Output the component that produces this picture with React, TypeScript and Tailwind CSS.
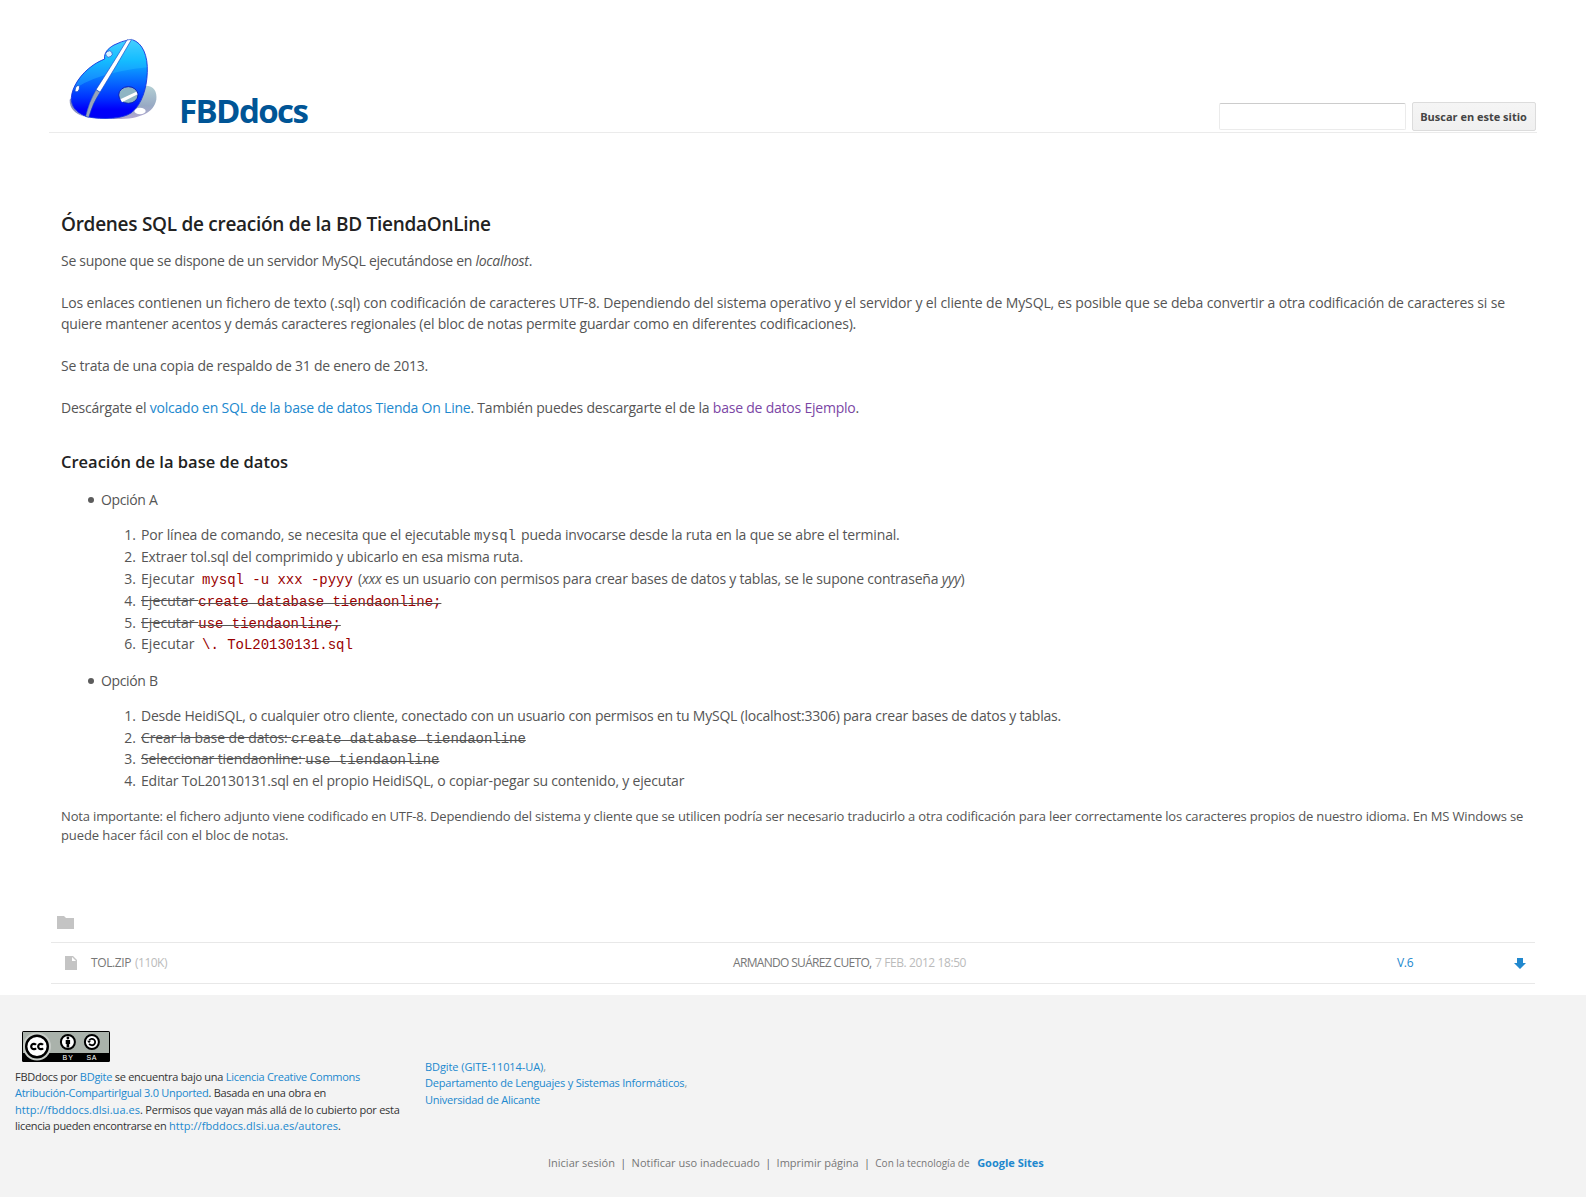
import type { ReactNode } from 'react';

const link = 'text-[#2188ce]';

function Logo() {
  return (
    <svg className="ml-[17px] mt-[37px] h-[84px] w-[94px] shrink-0" viewBox="78 50 282 252">
      <defs>
        <linearGradient id="body" x1="0" y1="0" x2="0" y2="1">
          <stop offset="0" stopColor="#5ad4ff" />
          <stop offset=".28" stopColor="#08b4ff" />
          <stop offset=".42" stopColor="#0a88ff" />
          <stop offset=".72" stopColor="#0030ff" />
          <stop offset=".85" stopColor="#0000fa" />
          <stop offset="1" stopColor="#0000f4" />
        </linearGradient>
        <linearGradient id="shade" x1="0" y1="0" x2="0" y2="1">
          <stop offset="0" stopColor="#b4d0d4" />
          <stop offset=".6" stopColor="#98aac4" />
          <stop offset="1" stopColor="#b3a6d0" />
        </linearGradient>
        <clipPath id="shape">
          <path d="M277 58C308 68 324 106 322 156C320 205 306 250 276 276C250 296 190 299 140 289C108 278 93 258 94 232C96 200 122 160 160 134C172 126 182 121 194 116C191 98 204 84 222 74Q246 62 277 58Z" />
        </clipPath>
      </defs>
      <path d="M89 238Q88 276 134 289Q95 272 94 232Z" fill="#8a90bd" />
      <path d="M316 196C342 196 352 214 349 238C341 278 298 298 220 296L205 292C255 286 294 254 316 196Z" fill="url(#shade)" />
      <ellipse cx="300" cy="272" rx="17" ry="10" fill="#fff" />
      <g clipPath="url(#shape)">
        <rect x="85" y="50" width="245" height="255" fill="url(#body)" />
        <path d="M94 214Q160 158 325 141V50H94Z" fill="#30ceff" opacity=".32" />
      </g>
      <path d="M277 58C308 68 324 106 322 156C320 205 306 250 276 276C250 296 190 299 140 289C108 278 93 258 94 232C96 200 122 160 160 134C172 126 182 121 194 116C191 98 204 84 222 74Q246 62 264 59" fill="none" stroke="#1230dc" strokeWidth="2.6" />
      <path d="M261 59L275 57Q232 132 180 216L168 208Q222 124 261 59Z" fill="#fff" stroke="#164bc8" strokeWidth="2" />
      <path d="M180 216Q158 248 146 291L137 288Q146 246 168 208Z" fill="#98a4ba" stroke="#164bc8" strokeWidth="1.5" />
      <ellipse cx="207" cy="101" rx="10" ry="9" fill="#d7f2ff" stroke="#184ed2" strokeWidth="2" transform="rotate(-35 207 101)" />
      <ellipse cx="112" cy="205" rx="6" ry="10" fill="#fff" stroke="#184ed2" strokeWidth="2.4" transform="rotate(20 112 205)" />
      <ellipse cx="265" cy="224" rx="29" ry="25" fill="#8fb5c3" stroke="#0a1fb8" strokeWidth="3" />
      <path d="M241 237L289 214L293 222L246 246Z" fill="#fff" />
    </svg>
  );
}

function CcBadge() {
  return (
    <svg className="block h-[31px] w-[88px]" viewBox="0 0 88 31">
      <rect width="88" height="31" rx="1.5" fill="#000" />
      <rect x="1" y="1" width="86" height="21" fill="#aab2ab" />
      <circle cx="15" cy="15.5" r="14" fill="#c8cdc8" />
      <circle cx="15" cy="15.5" r="10.8" fill="#fff" stroke="#000" strokeWidth="2.4" />
      <g fill="none" stroke="#000" strokeWidth="2.2">
        <path d="M14 13.8A2.7 2.7 0 1 0 14 17.2M21 13.8A2.7 2.7 0 1 0 21 17.2" />
      </g>
      <circle cx="45.9" cy="11" r="7" fill="#fff" stroke="#000" strokeWidth="2" />
      <circle cx="45.9" cy="7" r="1.4" />
      <path d="M43.7 9H48.1V13H47.2V16.5H44.6V13H43.7Z" />
      <circle cx="69.9" cy="11" r="7" fill="#fff" stroke="#000" strokeWidth="2" />
      <path d="M67.2 9.4A3.2 3.2 0 1 1 67.2 12.7" fill="none" stroke="#000" strokeWidth="1.8" />
      <path d="M65.2 9.8H69L67 12.2Z" />
      <g fill="#fff" fontFamily="Liberation Sans" fontSize="7">
        <text x="40.5" y="28.8" textLength="10.5">BY</text>
        <text x="64.5" y="28.8" textLength="10">SA</text>
      </g>
    </svg>
  );
}

function Line({ ls, children }: { ls: string; children: ReactNode }) {
  return <div className={`h-[21px] leading-[21px] ${ls}`}>{children}</div>;
}

function Item({ n, ls, children }: { n: number; ls: string; children: ReactNode }) {
  return (
    <li className={`flex h-[21.8px] items-baseline leading-[21px] ${ls}`}>
      <span className="mr-[5px] w-[75px] text-right tracking-normal">{n}.</span>
      {children}
    </li>
  );
}

function Option({ children }: { children: ReactNode }) {
  return (
    <div className="flex h-[21px] items-center leading-[21px] tracking-[-0.35px]">
      <span className="ml-[27px] mr-[7px] mt-px h-[6px] w-[6px] rounded-full bg-[#5c5c5c]" />
      {children}
    </div>
  );
}

const code = "font-['Liberation_Mono'] text-[14px] tracking-[-0.02px]";

export default function App() {
  return (
    <div className="h-[1197px] w-[1586px] overflow-hidden whitespace-nowrap bg-white font-['Open_Sans',sans-serif] text-[14px] text-[#555]">
      <header className="ml-[49px] flex h-[133px] w-[1488px] border-b border-[#ebebeb]">
        <Logo />
        <h1 className="ml-[19px] mt-[88px] h-[44px] text-[33px] font-bold leading-[45px] tracking-[-1.6px] text-[#005596]">FBDdocs</h1>
        <div className="ml-auto mr-px mt-[102px] flex">
          <input className="mr-[6px] mt-px h-[27px] w-[187px] rounded-[2px] border border-[#ebebeb] border-t-[#cccccc] bg-white" />
          <button className="h-[29px] w-[124px] rounded-[2px] border border-[#dcdcdc] bg-linear-to-b from-[#f5f5f5] to-[#f0f0f0] pr-px pt-[2px] text-[11px] font-bold text-[#444]">Buscar en este sitio</button>
        </div>
      </header>

      <main className="ml-[61px] h-[783px] pt-[76px]">
        <h2 className="h-[28px] text-[19px] font-semibold leading-[30px] tracking-[-0.28px] text-[#222]">Órdenes SQL de creación de la BD TiendaOnLine</h2>
        <div className="mt-[13px] flex flex-col gap-[21px]">
          <Line ls="tracking-[-0.29px]">Se supone que se dispone de un servidor MySQL ejecutándose en <i>localhost</i>.</Line>
          <div>
            <Line ls="tracking-[-0.133px]">Los enlaces contienen un fichero de texto (.sql) con codificación de caracteres UTF-8. Dependiendo del sistema operativo y el servidor y el cliente de MySQL, es posible que se deba convertir a otra codificación de caracteres si se</Line>
            <Line ls="tracking-[-0.2px]">quiere mantener acentos y demás caracteres regionales (el bloc de notas permite guardar como en diferentes codificaciones).</Line>
          </div>
          <Line ls="tracking-[-0.225px]">Se trata de una copia de respaldo de 31 de enero de 2013.</Line>
          <Line ls="tracking-[-0.218px]">Descárgate el <a className={link}>volcado en SQL de la base de datos Tienda On Line</a>. También puedes descargarte el de la <a className="text-[#7b46a5]">base de datos Ejemplo</a>.</Line>
        </div>
        <h3 className="mt-[32px] h-[24px] text-[16.5px] font-semibold leading-[24px] text-[#222]">Creación de la base de datos</h3>

        <div className="mt-[15px]"><Option>Opción A</Option></div>
        <ol className="mb-[14.6px] mt-[14.4px]">
          <Item n={1} ls="tracking-[-0.14px]">
            <span className="w-[333px]">Por línea de comando, se necesita que el ejecutable</span>
            <span className={`w-[47px] ${code}`}>mysql</span>
            <span className="tracking-[-0.17px]">pueda invocarse desde la ruta en la que se abre el terminal.</span>
          </Item>
          <Item n={2} ls="tracking-[-0.166px]">Extraer tol.sql del comprimido y ubicarlo en esa misma ruta.</Item>
          <Item n={3} ls="tracking-[-0.21px]">
            <span className="w-[61px] tracking-[0.08px]">Ejecutar</span>
            <span className={`w-[156px] text-[#990000] ${code}`}>mysql -u xxx -pyyy</span>
            <span>(<i>xxx</i> es un usuario con permisos para crear bases de datos y tablas, se le supone contraseña <i>yyy</i>)</span>
          </Item>
          <Item n={4} ls="tracking-[-0.2px]">
            <span className="tracking-[0.08px] line-through">Ejecutar <span className={`text-[#990000] ${code}`}>create database tiendaonline;</span></span>
          </Item>
          <Item n={5} ls="tracking-[-0.2px]">
            <span className="tracking-[0.08px] line-through">Ejecutar <span className={`text-[#990000] ${code}`}>use tiendaonline;</span></span>
          </Item>
          <Item n={6} ls="tracking-[-0.2px]">
            <span className="w-[61px] tracking-[0.08px]">Ejecutar</span>
            <span className={`text-[#990000] ${code}`}>\. ToL20130131.sql</span>
          </Item>
        </ol>

        <div><Option>Opción B</Option></div>
        <ol className="mt-[14px]">
          <Item n={1} ls="tracking-[-0.226px]">Desde HeidiSQL, o cualquier otro cliente, conectado con un usuario con permisos en tu MySQL (localhost:3306) para crear bases de datos y tablas.</Item>
          <Item n={2} ls="tracking-[-0.11px]">
            <span className="line-through">Crear la base de datos: <span className={code}>create database tiendaonline</span></span>
          </Item>
          <Item n={3} ls="tracking-[-0.11px]">
            <span className="line-through">Seleccionar tiendaonline: <span className={code}>use tiendaonline</span></span>
          </Item>
          <Item n={4} ls="tracking-[-0.18px]">Editar ToL20130131.sql en el propio HeidiSQL, o copiar-pegar su contenido, y ejecutar</Item>
        </ol>
        <div className="mt-[15px] text-[13px] leading-[19px]">
          <p className="tracking-[-0.163px]">Nota importante: el fichero adjunto viene codificado en UTF-8. Dependiendo del sistema y cliente que se utilicen podría ser necesario traducirlo a otra codificación para leer correctamente los caracteres propios de nuestro idioma. En MS Windows se</p>
          <p className="tracking-[-0.09px]">puede hacer fácil con el bloc de notas.</p>
        </div>
      </main>

      <section className="ml-[51px] w-[1484px]">
        <div className="h-[26px] pl-[6px]">
          <svg className="block h-[13px] w-[17px]" viewBox="0 0 17 13"><path d="M0 0H7L9 2H17V13H0Z" fill="#c4c4c4" /></svg>
        </div>
        <div className="flex h-[42px] items-center border-y border-[#e8e8e8] text-[12px] text-[#bbb]">
          <svg className="ml-[14px] h-[14px] w-[12px]" viewBox="0 0 12 14"><path d="M0 0H8L12 4V14H0Z" fill="#c4c4c4" /><path d="M7 1V5H11Z" fill="#fff" /></svg>
          <span className="ml-[14px] w-[44px] tracking-[-0.4px] text-[#777]">TOL.ZIP</span>
          <span className="w-[598px] tracking-[-0.5px]">(110K)</span>
          <span className="w-[142px] tracking-[-0.67px] text-[#777]">ARMANDO SUÁREZ CUETO,</span>
          <span className="w-[522px] tracking-[-0.41px]">7 FEB. 2012 18:50</span>
          <span className={`w-[117px] tracking-[-0.3px] ${link}`}>V.6</span>
          <svg className="h-[11px] w-[12px]" viewBox="0 0 12 11"><path d="M3 0H9V5H12L6 11L0 5H3Z" fill="#2188ce" /></svg>
        </div>
      </section>

      <footer className="mt-[11px] h-[202px] bg-[#f3f3f3] text-[11px] leading-[16.4px]">
        <div className="flex h-[156px] pl-[15px] pt-[36px]">
          <div className="w-[410px] text-[#333]">
            <div className="mb-[7px] pl-[7px]"><CcBadge /></div>
            <p className="tracking-[-0.277px]">FBDdocs por <a className={link}>BDgite</a> se encuentra bajo una <a className={link}>Licencia Creative Commons</a></p>
            <p className="tracking-[-0.281px]"><a className={link}>Atribución-CompartirIgual 3.0 Unported</a>. Basada en una obra en</p>
            <p className="tracking-[-0.235px]"><a className={`tracking-[0.05px] ${link}`}>http://fbddocs.dlsi.ua.es</a>. Permisos que vayan más allá de lo cubierto por esta</p>
            <p className="tracking-[-0.31px]">licencia pueden encontrarse en <a className={`tracking-[0.06px] ${link}`}>http://fbddocs.dlsi.ua.es/autores</a>.</p>
          </div>
          <div className="pt-[28px] text-[#999]">
            <p className="tracking-[-0.082px]"><a className={link}>BDgite (GITE-11014-UA)</a>,</p>
            <p className="tracking-[-0.217px]"><a className={link}>Departamento de Lenguajes y Sistemas Informáticos</a>,</p>
            <p className="tracking-[-0.246px]"><a className={link}>Universidad de Alicante</a></p>
          </div>
        </div>
        <div className="ml-[548px] flex items-baseline gap-[5.6px] pt-[4px] text-[#777]">
          <span>Iniciar sesión</span><span className="text-[10px] text-[#555]">|</span>
          <span>Notificar uso inadecuado</span><span className="text-[10px] text-[#555]">|</span>
          <span>Imprimir página</span><span className="text-[10px] text-[#555]">|</span>
          <span className="text-[10px]">Con la tecnología de</span>
          <b className={`ml-[2px] ${link}`}>Google Sites</b>
        </div>
      </footer>
    </div>
  );
}
